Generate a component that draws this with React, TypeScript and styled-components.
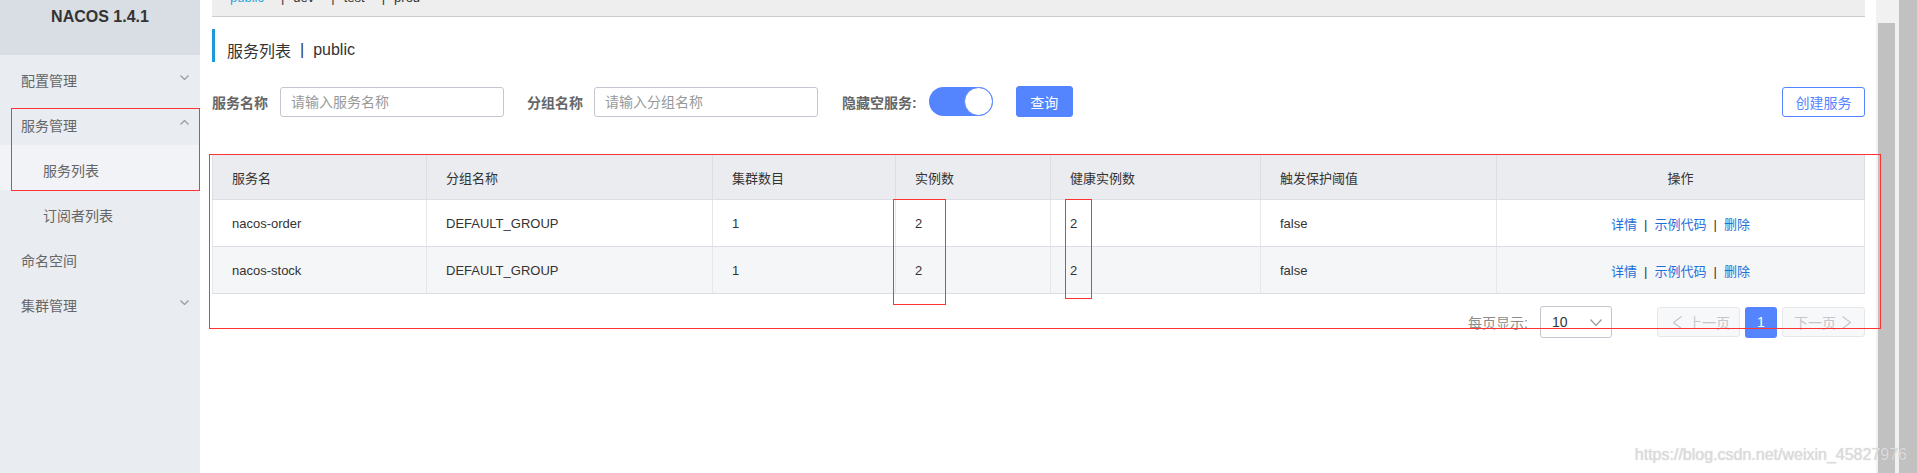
import React from 'react';
import styled, { createGlobalStyle } from 'styled-components';

const GlobalStyle = createGlobalStyle`
  html, body {
    margin: 0;
    padding: 0;
    height: 473px;
    overflow: hidden;
    background: #fff;
  }
  body {
    font-family: "Liberation Sans", "Noto Sans CJK SC", sans-serif;
    color: #333;
  }
  * { box-sizing: border-box; }
`;

const Layout = styled.div`
  position: relative;
  display: flex;
  height: 473px;
`;

const Sidebar = styled.aside`
  width: 200px;
  flex: none;
  background: #e9ecf1;
`;

const Logo = styled.div`
  height: 55px;
  background: #d9dde4;
  color: #333;
  font: bold 16px "Liberation Sans", sans-serif;
  text-align: center;
  line-height: 33px;
`;

const MenuItem = styled.div<{ $sub?: boolean; $active?: boolean }>`
  height: 45px;
  display: flex;
  align-items: center;
  justify-content: space-between;
  padding: 4px 11px 0 ${p => (p.$sub ? 43 : 21)}px;
  background: ${p => (p.$active ? '#f1f3f6' : 'transparent')};
  color: #666;
  font-size: 14px;

  svg { margin-top: -5px; }
`;

const Main = styled.main`
  flex: 1;
  min-width: 0;
  padding: 0 11px 0 12px;
`;

const EnvBar = styled.div`
  height: 17px;
  background: #eee;
  border-bottom: 1px solid #ccc;
  overflow: hidden;
`;

const EnvTabs = styled.div`
  display: flex;
  align-items: center;
  margin-top: -9px;
  padding-left: 18px;
  font-size: 13px;
  line-height: 13px;
`;

const EnvTab = styled.span<{ $current?: boolean }>`
  color: ${p => (p.$current ? '#2ca6df' : '#333')};
  padding-right: 17px;
`;

const EnvSep = styled.span`
  color: #333;
  margin-right: 9px;
`;

const Title = styled.h1`
  margin: 12px 0 0;
  height: 33px;
  padding: 9px 0 0 12px;
  border-left: 3px solid #1b9ad6;
  display: flex;
  align-items: center;
  gap: 9px;
  font-size: 16px;
  font-weight: normal;
  color: #333;
`;

const SearchBar = styled.div`
  display: flex;
  align-items: center;
  height: 31px;
  margin-top: 24px;
`;

const Label = styled.span<{ $gap: number }>`
  font-size: 14px;
  font-weight: bold;
  color: #666;
  margin-right: ${p => p.$gap}px;
`;

const Input = styled.input<{ $gap: number }>`
  width: 224px;
  height: 30px;
  border: 1px solid #c4c6cf;
  border-radius: 3px;
  padding: 0 10px;
  margin: 0 ${p => p.$gap}px 0 0;
  font: 14px "Liberation Sans", "Noto Sans CJK SC", sans-serif;
  outline: none;

  &::placeholder { color: #999; }
`;

const Switch = styled.div`
  width: 64px;
  height: 29px;
  border-radius: 15px;
  background: #5584ff;
  display: flex;
  justify-content: flex-end;
  margin-right: 23px;
`;

const Knob = styled.span`
  width: 29px;
  height: 29px;
  border-radius: 50%;
  background: #fff;
  border: 1px solid #5584ff;
`;

const Button = styled.button<{ $outline?: boolean }>`
  height: ${p => (p.$outline ? 30 : 31)}px;
  padding: 0;
  width: ${p => (p.$outline ? 83 : 57)}px;
  border-radius: 3px;
  border: 1px solid #5584ff;
  background: ${p => (p.$outline ? '#fff' : '#5584ff')};
  color: ${p => (p.$outline ? '#5584ff' : '#fff')};
  font: 14px "Liberation Sans", "Noto Sans CJK SC", sans-serif;
`;

const Spacer = styled.div`
  flex: 1;
`;

const Table = styled.table`
  width: 100%;
  margin-top: 37px;
  border-collapse: collapse;
  table-layout: fixed;
  font-size: 13px;
  color: #333;
`;

const HeadCell = styled.th<{ $center?: boolean }>`
  height: 45px;
  background: #ebecf0;
  border: 1px solid #dcdee3;
  font-weight: normal;
  text-align: ${p => (p.$center ? 'center' : 'left')};
  padding: 0 0 0 ${p => (p.$center ? 0 : 19)}px;
`;

const Row = styled.tr<{ $alt?: boolean }>`
  background: ${p => (p.$alt ? '#f5f6f8' : '#fff')};
`;

const Cell = styled.td<{ $center?: boolean }>`
  height: 47px;
  border: 1px solid #dcdee3;
  border-left-color: #e6e7eb;
  border-right-color: #e6e7eb;
  text-align: ${p => (p.$center ? 'center' : 'left')};
  padding: 0 0 0 ${p => (p.$center ? 0 : 19)}px;
`;

const ActionLink = styled.span`
  color: #1f6fd8;
`;

const ActionSep = styled.span`
  color: #333;
  margin: 0 7px;
`;

const Pager = styled.div`
  display: flex;
  align-items: center;
  justify-content: flex-end;
  margin-top: 12px;
  height: 32px;
`;

const PagerLabel = styled.span`
  font-size: 14px;
  color: #8c8c8c;
  margin-right: 12px;
`;

const PageSize = styled.div`
  width: 72px;
  height: 32px;
  border: 1px solid #c4c6cf;
  border-radius: 3px;
  display: flex;
  align-items: center;
  justify-content: space-between;
  padding: 0 9px 0 11px;
  font-size: 14px;
  color: #333;
  margin-right: 45px;
`;

const PageNav = styled.div<{ $next?: boolean }>`
  width: 83px;
  height: 30px;
  border: 1px solid #e6e7eb;
  border-radius: 3px;
  background: #f7f8fa;
  color: #c4c6cf;
  display: flex;
  align-items: center;
  gap: 6px;
  padding: ${p => (p.$next ? '0 0 0 11px' : '0 0 0 15px')};
  font-size: 14px;
`;

const PageNum = styled.div`
  width: 32px;
  height: 31px;
  margin: 0 5px;
  border-radius: 3px;
  background: #5584ff;
  color: #fff;
  display: flex;
  align-items: center;
  justify-content: center;
  font-size: 14px;
`;

const Scrollbars = styled.div`
  width: 41px;
  flex: none;
  display: flex;
`;

const InnerTrack = styled.div`
  width: 23px;
  background: #f1f1f1;
  padding: 23px 4px 0 2px;
`;

const Thumb = styled.div`
  height: 100%;
  background: #c1c1c1;
`;

const OuterTrack = styled.div`
  width: 18px;
  background: #c1c1c1;
`;

const Mark = styled.div<{ $l: number; $t: number; $w: number; $h: number }>`
  position: absolute;
  left: ${p => p.$l}px;
  top: ${p => p.$t}px;
  width: ${p => p.$w}px;
  height: ${p => p.$h}px;
  border: 1px solid #ff3333;
  pointer-events: none;
`;

const Watermark = styled.div`
  position: absolute;
  right: 10px;
  bottom: 9px;
  font: 16px "Liberation Sans", sans-serif;
  color: #dcdcdc;
  text-shadow: 0 0 1px rgba(160, 160, 160, 0.5);
`;

type Dir = 'up' | 'down' | 'left' | 'right';

const Chevron = ({ dir, w, h, color }: { dir: Dir; w: number; h: number; color: string }) => {
  const pts: Record<Dir, string> = {
    down: `0.5,0.5 ${w / 2},${h - 0.5} ${w - 0.5},0.5`,
    up: `0.5,${h - 0.5} ${w / 2},0.5 ${w - 0.5},${h - 0.5}`,
    left: `${w - 0.5},0.5 0.5,${h / 2} ${w - 0.5},${h - 0.5}`,
    right: `0.5,0.5 ${w - 0.5},${h / 2} 0.5,${h - 0.5}`,
  };
  return (
    <svg width={w} height={h} viewBox={`0 0 ${w} ${h}`}>
      <polyline points={pts[dir]} fill="none" stroke={color} strokeWidth="1.2" />
    </svg>
  );
};

const services = [
  { name: 'nacos-order', group: 'DEFAULT_GROUP', clusters: 1, instances: 2, healthy: 2, threshold: 'false' },
  { name: 'nacos-stock', group: 'DEFAULT_GROUP', clusters: 1, instances: 2, healthy: 2, threshold: 'false' },
];

const columns = [214, 286, 183, 155, 210, 236];

export default function App() {
  return (
    <Layout>
      <GlobalStyle />
      <Sidebar>
        <Logo>NACOS 1.4.1</Logo>
        <MenuItem>配置管理<Chevron dir="down" w={9} h={5} color="#999" /></MenuItem>
        <MenuItem>服务管理<Chevron dir="up" w={9} h={5} color="#999" /></MenuItem>
        <MenuItem $sub $active>服务列表</MenuItem>
        <MenuItem $sub>订阅者列表</MenuItem>
        <MenuItem>命名空间</MenuItem>
        <MenuItem>集群管理<Chevron dir="down" w={9} h={5} color="#999" /></MenuItem>
      </Sidebar>

      <Main>
        <EnvBar>
          <EnvTabs>
            <EnvTab $current>public</EnvTab>
            <EnvSep>|</EnvSep>
            <EnvTab>dev</EnvTab>
            <EnvSep>|</EnvSep>
            <EnvTab>test</EnvTab>
            <EnvSep>|</EnvSep>
            <EnvTab>prod</EnvTab>
          </EnvTabs>
        </EnvBar>

        <Title>
          <span>服务列表</span>
          <span>|</span>
          <span>public</span>
        </Title>

        <SearchBar>
          <Label $gap={12}>服务名称</Label>
          <Input $gap={23} placeholder="请输入服务名称" />
          <Label $gap={11}>分组名称</Label>
          <Input $gap={24} placeholder="请输入分组名称" />
          <Label $gap={12}>隐藏空服务:</Label>
          <Switch><Knob /></Switch>
          <Button>查询</Button>
          <Spacer />
          <Button $outline>创建服务</Button>
        </SearchBar>

        <Table>
          <colgroup>
            {columns.map((w, i) => <col key={i} style={{ width: w }} />)}
            <col />
          </colgroup>
          <thead>
            <tr>
              <HeadCell>服务名</HeadCell>
              <HeadCell>分组名称</HeadCell>
              <HeadCell>集群数目</HeadCell>
              <HeadCell>实例数</HeadCell>
              <HeadCell>健康实例数</HeadCell>
              <HeadCell>触发保护阈值</HeadCell>
              <HeadCell $center>操作</HeadCell>
            </tr>
          </thead>
          <tbody>
            {services.map((s, i) => (
              <Row key={s.name} $alt={i % 2 === 1}>
                <Cell>{s.name}</Cell>
                <Cell>{s.group}</Cell>
                <Cell>{s.clusters}</Cell>
                <Cell>{s.instances}</Cell>
                <Cell>{s.healthy}</Cell>
                <Cell>{s.threshold}</Cell>
                <Cell $center>
                  <ActionLink>详情</ActionLink>
                  <ActionSep>|</ActionSep>
                  <ActionLink>示例代码</ActionLink>
                  <ActionSep>|</ActionSep>
                  <ActionLink>删除</ActionLink>
                </Cell>
              </Row>
            ))}
          </tbody>
        </Table>

        <Pager>
          <PagerLabel>每页显示:</PagerLabel>
          <PageSize>
            10
            <Chevron dir="down" w={12} h={7} color="#999" />
          </PageSize>
          <PageNav>
            <Chevron dir="left" w={9} h={13} color="#c4c6cf" />
            上一页
          </PageNav>
          <PageNum>1</PageNum>
          <PageNav $next>
            下一页
            <Chevron dir="right" w={9} h={13} color="#c4c6cf" />
          </PageNav>
        </Pager>
      </Main>

      <Scrollbars>
        <InnerTrack><Thumb /></InnerTrack>
        <OuterTrack />
      </Scrollbars>

      <Mark $l={11} $t={108} $w={189} $h={83} />
      <Mark $l={209} $t={154} $w={1672} $h={175} />
      <Mark $l={893} $t={199} $w={53} $h={106} />
      <Mark $l={1065} $t={199} $w={27} $h={100} />

      <Watermark>https://blog.csdn.net/weixin_45827976</Watermark>
    </Layout>
  );
}
